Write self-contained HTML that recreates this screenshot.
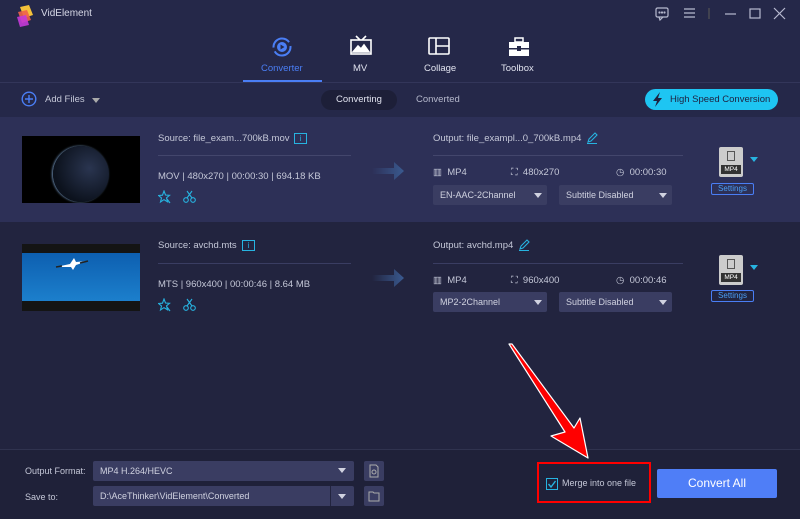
<!DOCTYPE html>
<html><head><meta charset="utf-8"><style>
*{margin:0;padding:0;box-sizing:border-box}
body{width:800px;height:519px;overflow:hidden;background:#22243f;font-family:"Liberation Sans",sans-serif;color:#c5c8d8;font-size:9px;position:relative}
.a{position:absolute}
.top{left:0;top:0;width:800px;height:117px;background:#252849}
.t{white-space:nowrap}
.sel{background:#3a3d62;border-radius:2px;color:#d0d2e0;font-size:9px;padding-left:7px;line-height:20px}
.tri{width:0;height:0;border-left:4px solid transparent;border-right:4px solid transparent;border-top:5px solid #d0d2e0}
</style></head><body>
<div class="a top"></div>
<svg class="a" style="left:15px;top:3px" width="22" height="24"><path d="M5 4 L14 2 L18 12 L9 15Z" fill="#f5c23a"/><path d="M3 9 L12 7 L16 17 L7 20Z" fill="#f0624a" opacity=".9"/><path d="M2 14 L11 12 L14 22 L5 24Z" fill="#c43ad8" opacity=".9"/></svg>
<div class="a t" style="left:41px;top:8px;font-size:10px;color:#d6d8e6">VidElement</div>
<svg class="a" style="left:655px;top:6px" width="135" height="16" fill="none" stroke="#b8bbd0" stroke-width="1.2"><rect x="1" y="2" width="12" height="9" rx="1.5"/><path d="M4 11 L5 14 L8 11"/><circle cx="4.5" cy="6.5" r=".5"/><circle cx="7" cy="6.5" r=".5"/><circle cx="9.5" cy="6.5" r=".5"/><path d="M29 3h11M29 7h11M29 11h11"/><path d="M54 2v11" stroke="#555"/><path d="M70 8h11"/><rect x="95" y="3" width="10" height="9"/><path d="M119 2l11 11M130 2l-11 11"/></svg>
<svg class="a" style="left:271px;top:36px" width="22" height="22"><circle cx="11" cy="11" r="8.5" fill="none" stroke="#4a7ef5" stroke-width="2" stroke-dasharray="22 4"/><circle cx="11" cy="11" r="5" fill="#4a7ef5"/><path d="M9.5 8.5v5l4-2.5z" fill="#252849"/></svg>
<div class="a t" style="left:261px;top:63px;color:#4a7ef5;font-size:9.5px">Converter</div>
<div class="a" style="left:243px;top:80px;width:79px;height:2px;background:#4a7ef5"></div>
<svg class="a" style="left:349px;top:35px" width="24" height="22" fill="none" stroke="#fff" stroke-width="1.6"><rect x="2" y="5" width="20" height="14"/><path d="M7 1l4 4M17 1l-4 4"/><path d="M4 17l5-6 3 3 3-4 5 7z" fill="#fff"/></svg>
<div class="a t" style="left:353px;top:63px;font-size:9.5px;color:#e0e2ee">MV</div>
<svg class="a" style="left:427px;top:36px" width="24" height="20" fill="none" stroke="#fff" stroke-width="1.6"><rect x="2" y="2" width="20" height="16" rx="1"/><path d="M9 2v16M9 10h13"/></svg>
<div class="a t" style="left:424px;top:63px;font-size:9.5px;color:#e0e2ee">Collage</div>
<svg class="a" style="left:507px;top:36px" width="24" height="22"><rect x="8" y="2" width="8" height="4" fill="none" stroke="#fff" stroke-width="1.5"/><rect x="2" y="6" width="20" height="14" fill="#fff"/><rect x="2" y="12" width="20" height="1.5" fill="#252849"/><rect x="10" y="10" width="4" height="5" fill="#252849"/></svg>
<div class="a t" style="left:501px;top:63px;font-size:9.5px;color:#e0e2ee">Toolbox</div>
<div class="a" style="left:0;top:82px;width:800px;height:1px;background:#33365a"></div>
<svg class="a" style="left:21px;top:91px" width="16" height="16" fill="none" stroke="#4a7ef5" stroke-width="1.4"><circle cx="8" cy="8" r="6.8"/><path d="M8 4v8M4 8h8"/></svg>
<div class="a t" style="left:45px;top:94px;font-size:9.5px">Add Files</div>
<div class="a tri" style="left:92px;top:98px;border-top-color:#aaa"></div>
<div class="a t" style="left:321px;top:90px;width:76px;height:20px;border-radius:10px;background:#1d1f38;text-align:center;line-height:20px;color:#e0e2ee;font-size:9.5px">Converting</div>
<div class="a t" style="left:416px;top:94px;font-size:9.5px;color:#b5b8cc">Converted</div>
<div class="a t" style="left:645px;top:89px;width:133px;height:21px;border-radius:11px;background:#1ec5f2;color:#1e2140;line-height:21px;padding-left:25px;font-size:9.5px">High Speed Conversion</div>
<svg class="a" style="left:652px;top:92px" width="12" height="15"><path d="M8 0L1 9h4l-2 6 7-9H6z" fill="#1e2140"/></svg>
<div class="a" style="left:0;top:117px;width:800px;height:105px;background:#2d3057"></div>
<div class="a" style="left:22px;top:136px;width:118px;height:67px;background:#000;overflow:hidden"><div class="a" style="left:31px;top:10px;width:56px;height:56px;border-radius:50%;background:radial-gradient(circle at 65% 40%,#2a3550,#0c121d 70%);box-shadow:-1px 0 2px #6a8ab0"></div></div>
<div class="a" style="left:22px;top:244px;width:118px;height:67px;background:#141414"><div class="a" style="left:0;top:9px;width:118px;height:48px;background:linear-gradient(#0d5fb0,#1c7fcc)"></div><svg class="a" style="left:32px;top:11px" width="40" height="20"><path d="M2 12l14-3 4-6 2 4 12-1-12 4-3 5-2-3z" fill="#fff"/><path d="M2 12l6-1M26 8l8-2" stroke="#222" stroke-width="1.5"/></svg></div>
<div class="a t" style="left:158px;top:133px;font-size:9.5px">Source: file_exam...700kB.mov</div>
<div class="a" style="left:294px;top:133px;width:13px;height:11px;border:1px solid #27b3e0;color:#27b3e0;font-size:8px;text-align:center;line-height:9px">i</div>
<div class="a" style="left:158px;top:155px;width:193px;height:1px;background:#43466c"></div>
<div class="a t" style="left:158px;top:171px;font-size:9.5px">MOV | 480x270 | 00:00:30 | 694.18 KB</div>
<div class="a t" style="left:158px;top:240px;font-size:9.5px">Source: avchd.mts</div>
<div class="a" style="left:242px;top:240px;width:13px;height:11px;border:1px solid #27b3e0;color:#27b3e0;font-size:8px;text-align:center;line-height:9px">i</div>
<div class="a" style="left:158px;top:263px;width:193px;height:1px;background:#3a3d62"></div>
<div class="a t" style="left:158px;top:279px;font-size:9.5px">MTS | 960x400 | 00:00:46 | 8.64 MB</div>
<svg class="a" style="left:158px;top:190px" width="40" height="14" fill="none" stroke="#27b3e0" stroke-width="1.1"><path d="M6 1l1.5 4 4 .3-3 2.5 1 4-3.5-2.2L2.5 12l1-4-3-2.5 4-.3z"/><path d="M9 9l3 4"/><circle cx="28" cy="10" r="2.3"/><circle cx="35" cy="10" r="2.3"/><path d="M29 8l5-7M34 8l-5-7"/></svg>
<svg class="a" style="left:158px;top:298px" width="40" height="14" fill="none" stroke="#27b3e0" stroke-width="1.1"><path d="M6 1l1.5 4 4 .3-3 2.5 1 4-3.5-2.2L2.5 12l1-4-3-2.5 4-.3z"/><path d="M9 9l3 4"/><circle cx="28" cy="10" r="2.3"/><circle cx="35" cy="10" r="2.3"/><path d="M29 8l5-7M34 8l-5-7"/></svg>
<svg class="a" style="left:372px;top:160px" width="32" height="22"><defs><linearGradient id="g"><stop offset="0" stop-color="#3a5a90" stop-opacity="0"/><stop offset="1" stop-color="#3a5a90"/></linearGradient></defs><path d="M0 8h22V2l10 9-10 9v-6H0z" fill="url(#g)"/></svg>
<svg class="a" style="left:372px;top:267px" width="32" height="22"><path d="M0 8h22V2l10 9-10 9v-6H0z" fill="url(#g)"/></svg>
<div class="a t" style="left:433px;top:133px;font-size:9.5px">Output: file_exampl...0_700kB.mp4</div>
<svg class="a" style="left:586px;top:132px" width="12" height="12" fill="none" stroke="#27b3e0" stroke-width="1.1"><path d="M2 10l1-3 6-6 2 2-6 6z M1 11.5h10"/></svg>
<div class="a" style="left:433px;top:155px;width:250px;height:1px;background:#43466c"></div>
<div class="a t" style="left:433px;top:167px;font-size:9.5px">▥&nbsp; MP4</div>
<div class="a t" style="left:511px;top:167px;font-size:9.5px">⛶&nbsp; 480x270</div>
<div class="a t" style="left:616px;top:167px;font-size:9.5px">◷&nbsp; 00:00:30</div>
<div class="a sel" style="left:433px;top:185px;width:114px">EN-AAC-2Channel</div><div class="a tri" style="left:534px;top:193px"></div>
<div class="a sel" style="left:559px;top:185px;width:113px">Subtitle Disabled</div><div class="a tri" style="left:659px;top:193px"></div>
<div class="a t" style="left:433px;top:240px;font-size:9.5px">Output: avchd.mp4</div>
<svg class="a" style="left:518px;top:239px" width="12" height="12" fill="none" stroke="#27b3e0" stroke-width="1.1"><path d="M2 10l1-3 6-6 2 2-6 6z M1 11.5h10"/></svg>
<div class="a" style="left:433px;top:263px;width:250px;height:1px;background:#3a3d62"></div>
<div class="a t" style="left:433px;top:275px;font-size:9.5px">▥&nbsp; MP4</div>
<div class="a t" style="left:511px;top:275px;font-size:9.5px">⛶&nbsp; 960x400</div>
<div class="a t" style="left:616px;top:275px;font-size:9.5px">◷&nbsp; 00:00:46</div>
<div class="a sel" style="left:433px;top:292px;width:114px">MP2-2Channel</div><div class="a tri" style="left:534px;top:300px"></div>
<div class="a sel" style="left:559px;top:292px;width:113px">Subtitle Disabled</div><div class="a tri" style="left:659px;top:300px"></div>
<div class="a" style="left:719px;top:147px;width:24px;height:30px;background:#ccc;border-radius:2px"><div class="a" style="left:2px;top:18px;width:20px;height:9px;background:#333;color:#fff;font-size:6.5px;text-align:center;line-height:9px">MP4</div><div class="a" style="left:8px;top:4px;width:8px;height:10px;border:1px solid #555"></div></div>
<div class="a tri" style="left:750px;top:157px;border-top-color:#27b3e0"></div>
<div class="a t" style="left:711px;top:183px;width:43px;height:12px;border:1px solid #4a7ef5;border-radius:2px;color:#4a9ef5;font-size:8px;text-align:center;line-height:10px">Settings</div>
<div class="a" style="left:719px;top:255px;width:24px;height:30px;background:#ccc;border-radius:2px"><div class="a" style="left:2px;top:18px;width:20px;height:9px;background:#333;color:#fff;font-size:6.5px;text-align:center;line-height:9px">MP4</div><div class="a" style="left:8px;top:4px;width:8px;height:10px;border:1px solid #555"></div></div>
<div class="a tri" style="left:750px;top:265px;border-top-color:#27b3e0"></div>
<div class="a t" style="left:711px;top:290px;width:43px;height:12px;border:1px solid #4a7ef5;border-radius:2px;color:#4a9ef5;font-size:8px;text-align:center;line-height:10px">Settings</div>
<div class="a" style="left:0;top:449px;width:800px;height:70px;background:#1f2139;border-top:1px solid #30334f"></div>
<div class="a t" style="left:25px;top:466px;font-size:9px">Output Format:</div>
<div class="a sel" style="left:93px;top:461px;width:261px">MP4 H.264/HEVC</div><div class="a tri" style="left:338px;top:468px"></div>
<div class="a t" style="left:25px;top:492px;font-size:9px">Save to:</div>
<div class="a sel" style="left:93px;top:486px;width:261px">D:\AceThinker\VidElement\Converted</div>
<div class="a" style="left:330px;top:486px;width:1px;height:20px;background:#22243f"></div><div class="a tri" style="left:338px;top:494px"></div>
<div class="a" style="left:364px;top:461px;width:20px;height:20px;background:#3a3d62;border-radius:2px"></div>
<div class="a" style="left:364px;top:486px;width:20px;height:20px;background:#3a3d62;border-radius:2px"></div>
<svg class="a" style="left:368px;top:464px" width="12" height="40" fill="none" stroke="#aaa"><path d="M2 1h6l2 2v10H2z"/><circle cx="6" cy="8" r="2"/><path d="M1 28h4l1 1h5v8H1z"/></svg>
<div class="a" style="left:537px;top:462px;width:114px;height:41px;border:2px solid #f00"></div>
<div class="a" style="left:546px;top:478px;width:12px;height:12px;border:1px solid #27b3e0"></div>
<svg class="a" style="left:546px;top:478px" width="12" height="12"><path d="M2.5 6l2.5 3 4.5-6" fill="none" stroke="#27b3e0" stroke-width="1.4"/></svg>
<div class="a t" style="left:562px;top:478px;font-size:9px">Merge into one file</div>
<div class="a t" style="left:657px;top:469px;width:120px;height:29px;background:#4f7ef7;border-radius:2px;color:#fff;text-align:center;line-height:29px;font-size:12px">Convert All</div>
<svg class="a" style="left:0;top:0" width="800" height="519"><path d="M509 344 L512 344 L574 428 L580 418 L588 458 L551 436 L565 432 Z" fill="#f00" stroke="#fff" stroke-width="1.2" stroke-linejoin="round"/></svg>
</body></html>
